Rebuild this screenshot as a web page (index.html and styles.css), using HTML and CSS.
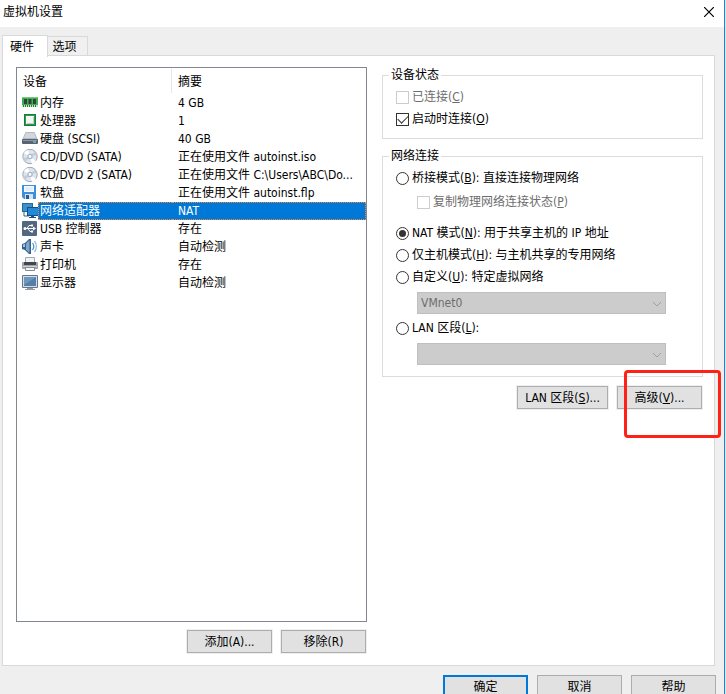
FILE: index.html
```html
<!DOCTYPE html>
<html lang="zh-CN">
<head>
<meta charset="utf-8">
<meta name="viewport" content="width=device-width, initial-scale=1">
<title>虚拟机设置</title>
<link rel="stylesheet" href="styles.css">
</head>
<body>
<div class="window">
  <header class="titlebar">
    <h1>虚拟机设置</h1>
    <button class="close" type="button" aria-label="关闭">
      <svg width="10" height="10" viewBox="0 0 10 10"><path d="M0 0L10 10M10 0L0 10" stroke="#000" stroke-width="1.2" fill="none"/></svg>
    </button>
  </header>

  <nav class="tabs">
    <button class="tab active" type="button">硬件</button>
    <button class="tab" type="button">选项</button>
  </nav>

  <main class="page">
    <section class="devices">
      <div class="list">
        <table>
          <thead><tr><th class="col-device">设备</th><th>摘要</th></tr></thead>
          <tbody>
            <tr><td><div class="device"><svg viewBox="0 0 16 16"><path d="M0 2h16v10H0z" fill="#3fae55"/><path d="M0 2h16v1H0z" fill="#7ccb83"/><path d="M2 4h3v5H2zM6.500 4h3v5h-3zM11 4h3v5h-3z" fill="#31423a"/><path d="M0 10h16v2H0z" fill="#cfe3b4"/><path d="M1.500 10v2M3.500 10v2M5.500 10v2M7.500 10v2M9.500 10v2M11.500 10v2M13.500 10v2" stroke="#2a7d3d"/></svg><span>内存</span></div></td><td>4 GB</td></tr>
            <tr><td><div class="device"><svg viewBox="0 0 16 16"><rect x="2" y="1" width="12" height="12" rx="1" fill="#2e9a53"/><rect x="2.500" y="1.500" width="11" height="11" fill="none" stroke="#167a38"/><rect x="4" y="3" width="8" height="8" fill="#f3f6f3"/><path d="M11 4h1v7H5v-1h6z" fill="#b9d0bd"/></svg><span>处理器</span></div></td><td>1</td></tr>
            <tr><td><div class="device"><svg viewBox="0 0 16 16"><path d="M3.500 1h9L16 9H0z" fill="#b5bac2"/><path d="M4 2h8l2 5H2z" fill="#d3d6db"/><rect y="8" width="16" height="5" rx="1" fill="#576473"/><path d="M1 9h14v1H1z" fill="#8d99a6"/><path d="M11 11h3" stroke="#8fe0d2"/></svg><span>硬盘 (SCSI)</span></div></td><td>40 GB</td></tr>
            <tr><td><div class="device"><svg viewBox="0 0 16 16"><circle cx="8" cy="7.500" r="7.200" fill="#dfe5ec" stroke="#9da8b6"/><path d="M8 8L2 4a7 7 0 0 1 4-3zM8 8l6 4a7 7 0 0 1-4 3z" fill="#fff"/><path d="M8 8l-7 1a7 7 0 0 0 2 4zM8 7l7-1a7 7 0 0 0-2-3z" fill="#c3cdd9"/><circle cx="8" cy="7.500" r="2.700" fill="#a9b8ca"/><circle cx="8" cy="7.500" r="1.400" fill="#fff"/></svg><span>CD/DVD (SATA)</span></div></td><td>正在使用文件 autoinst.iso</td></tr>
            <tr><td><div class="device"><svg viewBox="0 0 16 16"><circle cx="8" cy="7.500" r="7.200" fill="#dfe5ec" stroke="#9da8b6"/><path d="M8 8L2 4a7 7 0 0 1 4-3zM8 8l6 4a7 7 0 0 1-4 3z" fill="#fff"/><path d="M8 8l-7 1a7 7 0 0 0 2 4zM8 7l7-1a7 7 0 0 0-2-3z" fill="#c3cdd9"/><circle cx="8" cy="7.500" r="2.700" fill="#a9b8ca"/><circle cx="8" cy="7.500" r="1.400" fill="#fff"/></svg><span>CD/DVD 2 (SATA)</span></div></td><td>正在使用文件 C:\Users\ABC\Do...</td></tr>
            <tr><td><div class="device"><svg viewBox="0 0 16 16"><path d="M0 0h14v14H2l-2-2z" fill="#3d8fdb"/><path d="M2 1h10v6H2z" fill="#f7fafc"/><path d="M3 3h8M3 5h8" stroke="#cfe0ef"/><path d="M3 9h8v5H3z" fill="#d5e2ee"/><path d="M4 10h3v4H4z" fill="#235c98"/></svg><span>软盘</span></div></td><td>正在使用文件 autoinst.flp</td></tr>
            <tr class="selected"><td><div class="device"><svg viewBox="0 0 16 16"><rect x="0" y="0" width="11" height="9" fill="#24679f"/><rect x="1" y="1" width="9" height="7" fill="#3b91ca"/><path d="M2 9v4h5" fill="none" stroke="#376783"/><rect x="5" y="4" width="11" height="9" fill="#164e88"/><rect x="6" y="5" width="10" height="7" fill="#2489d4"/><path d="M9 13h3v1h2v1H7v-1h2z" fill="#164e88"/></svg><span>网络适配器</span></div></td><td>NAT</td></tr>
            <tr><td><div class="device"><svg viewBox="0 0 16 16"><rect width="15" height="15" rx="1" fill="#53687f"/><path d="M2 7.500h10M5 7.500l2-3h3M6 7.500l2 3h2" stroke="#fff" fill="none"/><circle cx="3" cy="7.500" r="1.500" fill="#fff"/><path d="M11 5.500l3 2-3 2zM9 3.500h2v2H9zM9 9.500h2v2H9z" fill="#fff"/></svg><span>USB 控制器</span></div></td><td>存在</td></tr>
            <tr><td><div class="device"><svg viewBox="0 0 16 16"><path d="M0 5l3-1 4-4h2v15H7l-4-4-3-1z" fill="#35618f"/><path d="M4 4.500L7.500 1v13L4 10.500z" fill="#7fa6cc"/><path d="M1 5.500l2-.5v3H1z" fill="#a9c5dd"/><path d="M10.500 4c1.500 2 1.500 5 0 7" fill="none" stroke="#4b8bc0" stroke-width="1.200"/><path d="M12.500 2c2.500 3 2.500 8 0 11" fill="none" stroke="#8fbbe0" stroke-width="1.200"/></svg><span>声卡</span></div></td><td>自动检测</td></tr>
            <tr><td><div class="device"><svg viewBox="0 0 16 16"><path d="M3.500 .5h9v6h-9z" fill="#f2f3f4" stroke="#a4a8ad"/><rect y="5" width="16" height="7" rx="1" fill="#9fa4ab"/><path d="M2 5h12v3H2z" fill="#42474f"/><path d="M1 9h14v1H1z" fill="#d0d3d7"/><path d="M3.500 10.500h9v3h-9z" fill="#f7f7f7" stroke="#858b93"/></svg><span>打印机</span></div></td><td>存在</td></tr>
            <tr><td><div class="device"><svg viewBox="0 0 16 16"><rect width="16" height="13" rx="1" fill="#62778c"/><rect x="1" y="1" width="14" height="11" fill="#d3dee8"/><rect x="2" y="2" width="12" height="9" fill="#557fa9"/><path d="M2 2h12L2 10z" fill="#6f96bd"/><path d="M5 13h6v1h2v1H3v-1h2z" fill="#939ba5"/></svg><span>显示器</span></div></td><td>自动检测</td></tr>
          </tbody>
        </table>
      </div>
      <div class="actions">
        <button class="btn" type="button">添加(A)...</button>
        <button class="btn" type="button">移除(R)</button>
      </div>
    </section>

    <form class="settings">
      <fieldset>
        <legend>设备状态</legend>
        <label class="option disabled"><input type="checkbox" disabled><span>已连接(<u>C</u>)</span></label>
        <label class="option"><input type="checkbox" checked><span>启动时连接(<u>O</u>)</span></label>
      </fieldset>
      <fieldset>
        <legend>网络连接</legend>
        <label class="option"><input type="radio" name="net"><span>桥接模式(<u>B</u>): 直接连接物理网络</span></label>
        <label class="option disabled nested"><input type="checkbox" disabled><span>复制物理网络连接状态(<u>P</u>)</span></label>
        <label class="option"><input type="radio" name="net" checked><span>NAT 模式(<u>N</u>): 用于共享主机的 IP 地址</span></label>
        <label class="option"><input type="radio" name="net"><span>仅主机模式(<u>H</u>): 与主机共享的专用网络</span></label>
        <label class="option"><input type="radio" name="net"><span>自定义(<u>U</u>): 特定虚拟网络</span></label>
        <div class="combo">
          <select disabled aria-label="特定虚拟网络"><option>VMnet0</option></select>
          <svg width="10" height="6" viewBox="0 0 10 6"><path d="M1 1l4 4 4-4" fill="none" stroke="#a0a0a0"/></svg>
        </div>
        <label class="option"><input type="radio" name="net"><span>LAN 区段(<u>L</u>):</span></label>
        <div class="combo">
          <select disabled aria-label="LAN 区段"><option></option></select>
          <svg width="10" height="6" viewBox="0 0 10 6"><path d="M1 1l4 4 4-4" fill="none" stroke="#a0a0a0"/></svg>
        </div>
      </fieldset>
      <div class="actions">
        <button class="btn wide" type="button">LAN 区段(<u>S</u>)...</button>
        <div class="marked"><button class="btn" type="button">高级(<u>V</u>)...</button><div class="marker"></div></div>
      </div>
    </form>
  </main>

  <footer class="footer">
    <button class="btn default" type="button">确定</button>
    <button class="btn" type="button">取消</button>
    <button class="btn" type="button">帮助</button>
  </footer>
</div>
</body>
</html>
```
FILE: styles.css
```css
* { box-sizing: border-box; }

body {
  margin: 0;
  background: #d9ebf7;
  color: #000;
  font: 12px/18px "DejaVu Sans Condensed", "Noto Sans CJK SC", sans-serif;
}

button, select, input { margin: 0; font: inherit; color: inherit; }

.window {
  display: flex;
  flex-direction: column;
  height: 100vh;
  margin-right: 1px;
  overflow: hidden;
  border-right: 1px solid #1883d7;
  background: #efefef;
}

.titlebar {
  display: flex;
  flex: none;
  align-items: center;
  justify-content: space-between;
  height: 27px;
  padding: 0 10px 4px 3px;
  background: #fff;
}
.titlebar h1 { margin: 0; font-size: 12px; font-weight: normal; }
.close { display: flex; padding: 0; border: 0; background: none; }

.tabs {
  display: flex;
  flex: none;
  align-items: flex-end;
  height: 29px;
  padding-left: 2px;
}
.tab {
  width: 40px;
  height: 20px;
  padding: 0 6px 0 0;
  border: 1px solid #d9d9d9;
  border-width: 1px 1px 0 0;
  background: #f0f0f0;
}
.tab.active {
  z-index: 1;
  width: 46px;
  height: 22px;
  margin-bottom: -1px;
  border-left-width: 1px;
  background: #fff;
}

.page {
  display: grid;
  flex: 1;
  grid-template-columns: 351fr 321fr;
  gap: 15px;
  min-height: 0;
  margin: -1px 9px 0 2px;
  padding: 11px 11px 12px 13px;
  border: 1px solid #d9d9d9;
  background: #fff;
}

.devices { display: flex; flex-direction: column; min-height: 0; }
.list { flex: 1; min-height: 0; overflow: hidden; border: 1px solid #828790; }
.actions { display: flex; justify-content: flex-end; gap: 9px; margin-top: 8px; padding-right: 1px; }

table { width: 100%; border-spacing: 0; table-layout: fixed; }
th, td { overflow: hidden; height: 18px; padding: 0 6px; text-align: left; text-overflow: ellipsis; white-space: nowrap; }
th {
  height: 26px;
  padding: 2px 6px 0;
  font-weight: normal;
}
.col-device {
  width: 155px;
  background: linear-gradient(#e5e5e5, #e5e5e5) right 1px / 1px 24px no-repeat;
}
.device { display: flex; height: 18px; }
.device svg { flex: none; width: 16px; height: 16px; margin-top: 1px; }
.device span { flex: 1; padding-left: 2px; }
td:first-child { padding: 0 0 0 5px; }
.selected { color: #fff; }
.selected span, .selected td + td { background: #0078d7; }
.selected span { padding-left: 1px; border: 1px dotted #ff8728; border-right: 0; line-height: 16px; }
.selected td + td { border: 1px dotted #ff8728; border-left: 0; line-height: 16px; }

.btn {
  width: 85px;
  height: 23px;
  padding: 0;
  border: 1px solid #adadad;
  background: #e1e1e1;
  outline: 1px solid #efefef;
}
.btn.wide { width: 91px; }
.btn.default { border: 2px solid #0078d7; }

fieldset {
  min-width: 0;
  margin: 0 0 9px;
  padding: 3px 13px 8px;
  border: 1px solid #dcdcdc;
}
legend { margin-left: -7px; padding: 0 2px; line-height: 16px; }
.option { display: flex; align-items: center; height: 22px; }
.option.disabled { color: #6d6d6d; }
.option.nested { margin: 2px 0 9px 21px; }
.option span { padding-left: 3px; }
.option input {
  display: flex;
  flex: none;
  align-items: center;
  justify-content: center;
  width: 13px;
  height: 13px;
  border: 1px solid #333;
  background: #fff;
  appearance: none;
}
.option input:disabled { border-color: #ccc; }
.option input[type="radio"] { border-radius: 50%; }
.option input[type="radio"]:checked::before {
  width: 7px;
  height: 7px;
  border-radius: 50%;
  background: #333;
  content: "";
}
.option input[type="checkbox"]:checked::before {
  width: 9px;
  height: 5px;
  margin-top: -3px;
  border: solid #333;
  border-width: 0 0 1px 1px;
  transform: rotate(-45deg);
  content: "";
}

.combo { position: relative; margin: 4px 23px 3px 21px; }
.combo select {
  display: block;
  width: 100%;
  height: 22px;
  padding: 0 3px;
  border: 1px solid #bfbfbf;
  border-radius: 0;
  background: #ccc;
  color: #6d6d6d;
  opacity: 1;
  appearance: none;
}
.combo svg { position: absolute; top: 9px; right: 4px; pointer-events: none; }

.marked { position: relative; display: flex; }
.marker {
  position: absolute;
  top: -16px;
  right: -19px;
  width: 97px;
  height: 68px;
  border: 3px solid #ff2116;
  border-radius: 4px;
  pointer-events: none;
}

.footer {
  display: flex;
  flex: none;
  justify-content: flex-end;
  gap: 9px;
  height: 28px;
  padding: 9px 8px 0 0;
  overflow: hidden;
}
.footer .btn { flex: none; }
```
